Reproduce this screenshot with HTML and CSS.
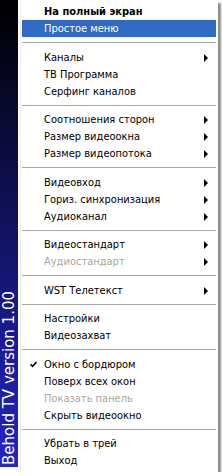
FILE: index.html
```html
<!DOCTYPE html>
<html>
<head>
<meta charset="utf-8">
<link rel="stylesheet" href="styles.css">
</head>
<body>
<div class="menu">
  <div class="sidebar"><span class="brand">Behold TV version 1.00</span></div>
  <div class="divider"></div>
  <ul class="items">
    <li class="item bold"><span class="icon"></span><span class="label">На полный экран</span></li>
    <li class="item active"><span class="icon"></span><span class="label">Простое меню</span></li>
    <li class="sep tall"></li>
    <li class="item"><span class="icon"></span><span class="label">Каналы</span><span class="arrow"></span></li>
    <li class="item"><span class="icon"></span><span class="label">ТВ Программа</span></li>
    <li class="item"><span class="icon"></span><span class="label">Серфинг каналов</span></li>
    <li class="sep"></li>
    <li class="item"><span class="icon"></span><span class="label">Соотношения сторон</span><span class="arrow"></span></li>
    <li class="item"><span class="icon"></span><span class="label">Размер видеоокна</span><span class="arrow"></span></li>
    <li class="item"><span class="icon"></span><span class="label">Размер видеопотока</span><span class="arrow"></span></li>
    <li class="sep tall"></li>
    <li class="item"><span class="icon"></span><span class="label">Видеовход</span><span class="arrow"></span></li>
    <li class="item"><span class="icon"></span><span class="label">Гориз. синхронизация</span><span class="arrow"></span></li>
    <li class="item"><span class="icon"></span><span class="label">Аудиоканал</span><span class="arrow"></span></li>
    <li class="sep"></li>
    <li class="item"><span class="icon"></span><span class="label">Видеостандарт</span><span class="arrow"></span></li>
    <li class="item disabled"><span class="icon"></span><span class="label">Аудиостандарт</span><span class="arrow"></span></li>
    <li class="sep tall"></li>
    <li class="item"><span class="icon"></span><span class="label">WST Телетекст</span><span class="arrow"></span></li>
    <li class="sep"></li>
    <li class="item"><span class="icon"></span><span class="label">Настройки</span></li>
    <li class="item"><span class="icon"></span><span class="label">Видеозахват</span></li>
    <li class="sep tall"></li>
    <li class="item"><span class="icon"><svg class="check" width="7" height="7" viewBox="0 0 7 7"><path d="M0.5 3.2 L2.5 5.4 L6.5 1" fill="none" stroke="#000" stroke-width="1.6"/></svg></span><span class="label">Окно с бордюром</span></li>
    <li class="item"><span class="icon"></span><span class="label">Поверх всех окон</span></li>
    <li class="item disabled"><span class="icon"></span><span class="label">Показать панель</span></li>
    <li class="item"><span class="icon"></span><span class="label">Скрыть видеоокно</span></li>
    <li class="sep"></li>
    <li class="item"><span class="icon"></span><span class="label">Убрать в трей</span></li>
    <li class="item"><span class="icon"></span><span class="label">Выход</span></li>
  </ul>
</div>
</body>
</html>
```

FILE: styles.css
```css
html, body {
  margin: 0;
  padding: 0;
  background: #ffffff;
}

.menu {
  width: 218px;
  height: 472px;
  display: flex;
  background: #ffffff;
  box-shadow: 3px 3px 2px rgba(0, 0, 0, 0.45);
  font-family: "DejaVu Sans Condensed", "Liberation Sans", sans-serif;
  font-size: 11px;
  color: #000000;
}

.sidebar {
  width: 18px;
  height: 467px;
  background: linear-gradient(#000000, #2424c4);
  display: flex;
  flex-direction: column;
  justify-content: flex-end;
  align-items: center;
  overflow: hidden;
}

.brand {
  writing-mode: vertical-rl;
  transform: rotate(180deg);
  font-family: "DejaVu Sans", sans-serif;
  font-size: 15px;
  line-height: 18px;
  color: #ffffff;
  white-space: nowrap;
  padding-top: 2px;
}

.divider {
  width: 1px;
  margin-left: 2px;
  background: #ececec;
}

.items {
  list-style: none;
  margin: 0;
  padding: 3px 0 0 0;
  margin-left: 1px;
  width: 194px;
}

.item {
  height: 17px;
  display: flex;
  align-items: center;
  line-height: 17px;
  white-space: nowrap;
}

.icon {
  width: 22px;
  height: 17px;
  display: flex;
  align-items: center;
  justify-content: center;
}

.label {
  flex: 1;
}

.bold .label {
  font-weight: bold;
}

.active {
  background: #316ac5;
  color: #ffffff;
}

.disabled {
  color: #aca899;
}

.arrow {
  width: 0;
  height: 0;
  border-top: 4px solid transparent;
  border-bottom: 4px solid transparent;
  border-left: 4px solid #000000;
  margin-right: 8px;
}

.sep {
  height: 11px;
  box-sizing: border-box;
  padding-top: 5px;
}

.sep.tall {
  height: 12px;
}

.sep::before {
  content: "";
  display: block;
  height: 1px;
  background: #a6a6a6;
}
```
